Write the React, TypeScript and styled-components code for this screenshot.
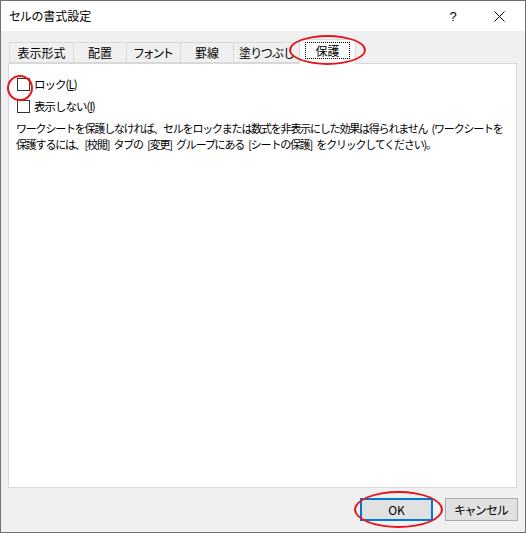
import React from "react";
import styled, { createGlobalStyle } from "styled-components";

const GlobalStyle = createGlobalStyle`
  html, body {
    margin: 0;
    padding: 0;
    background: #f0f0f0;
  }
  body {
    font-family: "Noto Sans CJK JP", "Noto Sans", sans-serif;
    font-size: 12px;
    color: #000;
  }
`;

const Window = styled.div`
  position: relative;
  width: 526px;
  height: 533px;
  box-sizing: border-box;
  border: 1px solid #707070;
  background: #f0f0f0;
  display: flex;
  flex-direction: column;
  overflow: hidden;
`;

const TitleBar = styled.div`
  height: 30px;
  flex: none;
  background: #fff;
  display: flex;
  align-items: center;
  padding-left: 8px;
  padding-right: 3px;
`;

const Title = styled.div`
  flex: 1;
  font-size: 12px;
  font-feature-settings: "palt";
  line-height: 16px;
`;

const TitleButton = styled.div`
  width: 46px;
  height: 30px;
  display: flex;
  align-items: center;
  justify-content: center;
  font-family: "Liberation Sans", sans-serif;
  font-size: 13px;
`;

const Body = styled.div`
  flex: 1;
  display: flex;
  flex-direction: column;
  padding: 8px 8px 0 7px;
  min-height: 0;
`;

const TabRow = styled.div`
  display: flex;
  align-items: flex-end;
  height: 25px;
  margin-bottom: -1px;
  padding-left: 1px;
  position: relative;
  z-index: 1;
`;

const Tab = styled.div<{ $width: number; $active?: boolean }>`
  box-sizing: border-box;
  width: ${({ $width }) => $width}px;
  height: ${({ $active }) => ($active ? 25 : 21)}px;
  margin-bottom: ${({ $active }) => ($active ? 0 : 1)}px;
  margin-left: -1px;
  &:first-child {
    margin-left: 0;
  }
  border: 1px solid #d9d9d9;
  border-bottom: ${({ $active }) => ($active ? "none" : "1px solid #d9d9d9")};
  background: ${({ $active }) => ($active ? "#fff" : "#f0f0f0")};
  position: relative;
  z-index: ${({ $active }) => ($active ? 2 : 1)};
  display: flex;
  align-items: ${({ $active }) => ($active ? "flex-start" : "center")};
  justify-content: center;
  padding-top: ${({ $active }) => ($active ? 2 : 0)}px;
  font-size: 12px;
  line-height: 15px;
  font-feature-settings: "palt";
  white-space: nowrap;
`;

const FocusLabel = styled.span`
  border: 1px dotted #000;
  padding: 0 9px;
  line-height: 15px;
`;

const Panel = styled.div`
  flex: 1;
  background: #fff;
  border: 1px solid #d9d9d9;
  padding: 12px 8px 0 8px;
  display: flex;
  flex-direction: column;
  gap: 6px;
`;

const CheckRow = styled.label`
  display: flex;
  align-items: center;
  height: 16px;
  gap: 3px;
  font-size: 11.5px;
  line-height: 16px;
  letter-spacing: -1px;
  white-space: nowrap;
`;

const CheckBox = styled.span`
  box-sizing: border-box;
  width: 13px;
  height: 13px;
  border: 1px solid #333;
  background: #fff;
  flex: none;
  margin-right: 1px;
`;

const Note = styled.div`
  margin-left: -1px;
  font-size: 11px;
  line-height: 16px;
  letter-spacing: -1.2px;
  word-spacing: 3px;
`;

const NoteLine = styled.div`
  white-space: nowrap;
`;

const Footer = styled.div`
  flex: none;
  height: 44px;
  box-sizing: border-box;
  padding: 10px 7px 11px 0;
  display: flex;
  justify-content: flex-end;
  gap: 12px;
`;

const Button = styled.button<{ $default?: boolean }>`
  box-sizing: border-box;
  width: 73px;
  height: 23px;
  margin: 0;
  padding: 0;
  background: #e1e1e1;
  border: ${({ $default }) => ($default ? "2px solid #0078d7" : "1px solid #adadad")};
  font-family: "Noto Sans CJK JP", "Noto Sans", sans-serif;
  font-size: 12px;
  font-feature-settings: "palt";
  color: #000;
`;

const Mark = styled.div<{ $x: number; $y: number; $w: number; $h: number }>`
  position: absolute;
  left: ${({ $x }) => $x - 1}px;
  top: ${({ $y }) => $y - 1}px;
  width: ${({ $w }) => $w}px;
  height: ${({ $h }) => $h}px;
  box-sizing: border-box;
  border: 2px solid #e8141c;
  border-radius: 50%;
  pointer-events: none;
  z-index: 5;
`;

const tabs = [
  { label: "表示形式", width: 65 },
  { label: "配置", width: 54 },
  { label: "フォント", width: 55 },
  { label: "罫線", width: 54 },
  { label: "塗りつぶし", width: 67 },
];

function CloseIcon() {
  return (
    <svg width="11" height="11" viewBox="0 0 11 11">
      <path d="M0.5 0.5 L10.5 10.5 M10.5 0.5 L0.5 10.5" stroke="#000" strokeWidth="1" />
    </svg>
  );
}

export default function App() {
  return (
    <>
      <GlobalStyle />
      <Window>
        <TitleBar>
          <Title>セルの書式設定</Title>
          <TitleButton>?</TitleButton>
          <TitleButton>
            <CloseIcon />
          </TitleButton>
        </TitleBar>
        <Body>
          <TabRow>
            {tabs.map((t) => (
              <Tab key={t.label} $width={t.width}>
                {t.label}
              </Tab>
            ))}
            <Tab $width={57} $active>
              <FocusLabel>保護</FocusLabel>
            </Tab>
          </TabRow>
          <Panel>
            <CheckRow>
              <CheckBox />
              <span>
                ロック(<u>L</u>)
              </span>
            </CheckRow>
            <CheckRow>
              <CheckBox />
              <span>
                表示しない(<u>I</u>)
              </span>
            </CheckRow>
            <Note>
              <NoteLine>
                ワークシートを保護しなければ、セルをロックまたは数式を非表示にした効果は得られません (ワークシートを
              </NoteLine>
              <NoteLine>
                保護するには、[校閲] タブの [変更] グループにある [シートの保護] をクリックしてください)。
              </NoteLine>
            </Note>
          </Panel>
        </Body>
        <Footer>
          <Button $default>OK</Button>
          <Button>キャンセル</Button>
        </Footer>
        <Mark $x={289} $y={35} $w={77} $h={30} />
        <Mark $x={7} $y={75} $w={26} $h={26} />
        <Mark $x={354} $y={491} $w={89} $h={37} />
      </Window>
    </>
  );
}
